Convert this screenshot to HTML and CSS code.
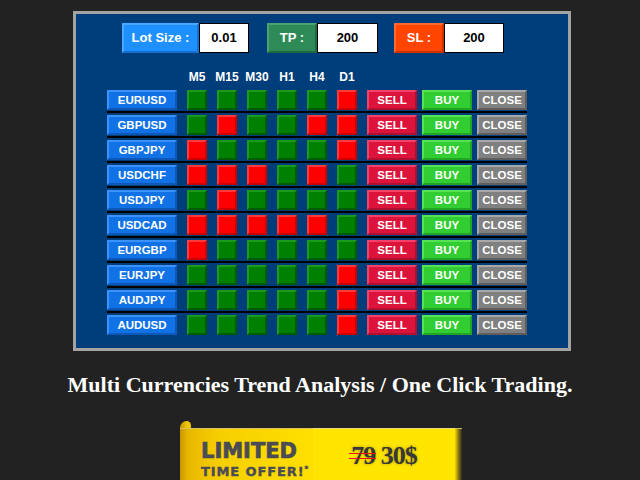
FILE: index.html
```html
<!DOCTYPE html>
<html>
<head>
<meta charset="utf-8">
<link rel="stylesheet" href="styles.css">
</head>
<body>
<div class="panel">
  <div class="topbar">
    <div class="tag tag-lot">Lot Size :</div><div class="field field-lot">0.01</div>
    <div class="tag tag-tp">TP :</div><div class="field field-tp">200</div>
    <div class="tag tag-sl">SL :</div><div class="field field-sl">200</div>
  </div>
  <div class="heads">
    <div class="head-space"></div>
    <div class="head"><span>M5</span></div>
    <div class="head"><span>M15</span></div>
    <div class="head"><span>M30</span></div>
    <div class="head"><span>H1</span></div>
    <div class="head"><span>H4</span></div>
    <div class="head"><span>D1</span></div>
  </div>
  <div class="grid">
    <div class="row"><div class="btn sym">EURUSD</div><div class="sq g"></div><div class="sq g"></div><div class="sq g"></div><div class="sq g"></div><div class="sq g"></div><div class="sq r"></div><div class="trade"><div class="btn sell">SELL</div><div class="btn buy">BUY</div><div class="btn close">CLOSE</div></div></div>
    <div class="rule"></div>
    <div class="row"><div class="btn sym">GBPUSD</div><div class="sq g"></div><div class="sq r"></div><div class="sq g"></div><div class="sq g"></div><div class="sq r"></div><div class="sq r"></div><div class="trade"><div class="btn sell">SELL</div><div class="btn buy">BUY</div><div class="btn close">CLOSE</div></div></div>
    <div class="rule"></div>
    <div class="row"><div class="btn sym">GBPJPY</div><div class="sq r"></div><div class="sq g"></div><div class="sq g"></div><div class="sq g"></div><div class="sq g"></div><div class="sq r"></div><div class="trade"><div class="btn sell">SELL</div><div class="btn buy">BUY</div><div class="btn close">CLOSE</div></div></div>
    <div class="rule"></div>
    <div class="row"><div class="btn sym">USDCHF</div><div class="sq r"></div><div class="sq r"></div><div class="sq r"></div><div class="sq g"></div><div class="sq r"></div><div class="sq g"></div><div class="trade"><div class="btn sell">SELL</div><div class="btn buy">BUY</div><div class="btn close">CLOSE</div></div></div>
    <div class="rule"></div>
    <div class="row"><div class="btn sym">USDJPY</div><div class="sq g"></div><div class="sq r"></div><div class="sq g"></div><div class="sq g"></div><div class="sq g"></div><div class="sq g"></div><div class="trade"><div class="btn sell">SELL</div><div class="btn buy">BUY</div><div class="btn close">CLOSE</div></div></div>
    <div class="rule"></div>
    <div class="row"><div class="btn sym">USDCAD</div><div class="sq r"></div><div class="sq r"></div><div class="sq r"></div><div class="sq r"></div><div class="sq r"></div><div class="sq g"></div><div class="trade"><div class="btn sell">SELL</div><div class="btn buy">BUY</div><div class="btn close">CLOSE</div></div></div>
    <div class="rule"></div>
    <div class="row"><div class="btn sym">EURGBP</div><div class="sq r"></div><div class="sq g"></div><div class="sq g"></div><div class="sq g"></div><div class="sq g"></div><div class="sq g"></div><div class="trade"><div class="btn sell">SELL</div><div class="btn buy">BUY</div><div class="btn close">CLOSE</div></div></div>
    <div class="rule"></div>
    <div class="row"><div class="btn sym">EURJPY</div><div class="sq g"></div><div class="sq g"></div><div class="sq g"></div><div class="sq g"></div><div class="sq g"></div><div class="sq r"></div><div class="trade"><div class="btn sell">SELL</div><div class="btn buy">BUY</div><div class="btn close">CLOSE</div></div></div>
    <div class="rule"></div>
    <div class="row"><div class="btn sym">AUDJPY</div><div class="sq g"></div><div class="sq g"></div><div class="sq g"></div><div class="sq g"></div><div class="sq g"></div><div class="sq r"></div><div class="trade"><div class="btn sell">SELL</div><div class="btn buy">BUY</div><div class="btn close">CLOSE</div></div></div>
    <div class="rule"></div>
    <div class="row"><div class="btn sym">AUDUSD</div><div class="sq g"></div><div class="sq g"></div><div class="sq g"></div><div class="sq g"></div><div class="sq g"></div><div class="sq r"></div><div class="trade"><div class="btn sell">SELL</div><div class="btn buy">BUY</div><div class="btn close">CLOSE</div></div></div>
  </div>
</div>
<h1 class="title">Multi Currencies Trend Analysis / One Click Trading.</h1>
<div class="banner">
  <div class="curl"></div>
  <div class="ribbon">
    <div class="ribbon-left">
      <div class="limited">LIMITED</div>
      <div class="offer">TIME OFFER!<span class="star">*</span></div>
    </div>
    <div class="ribbon-right"><span class="old">79</span> 30$</div>
    <div class="ribbon-shade"></div>
  </div>
</div>
</body>
</html>
```
FILE: styles.css
```css
html, body {
  margin: 0;
  padding: 0;
}
body {
  background: #222222;
  width: 640px;
  height: 480px;
  overflow: hidden;
  font-family: "Liberation Sans", Arial, sans-serif;
}

.panel {
  box-sizing: border-box;
  width: 498px;
  height: 340px;
  margin: 11px 0 0 73px;
  border: 3px solid #a3a3a3;
  background: #003d7b;
  padding-top: 9px;
}

.topbar {
  display: flex;
  margin-left: 46px;
  height: 30px;
}
.tag {
  box-sizing: border-box;
  height: 30px;
  border: 2px solid;
  color: #fff;
  font-weight: bold;
  font-size: 13px;
  line-height: 26px;
  text-align: center;
}
.tag-lot {
  width: 77px;
  background: #1e90ff;
  border-color: #48a8ff #1670d0 #1670d0 #48a8ff;
}
.tag-tp {
  width: 50px;
  margin-left: 18px;
  background: #2e8b57;
  border-color: #47a470 #1f6a40 #1f6a40 #47a470;
}
.tag-sl {
  width: 50px;
  margin-left: 16px;
  background: #ff4500;
  border-color: #ff6a30 #cc3300 #cc3300 #ff6a30;
}
.field {
  box-sizing: border-box;
  height: 30px;
  background: #fff;
  border: 1px solid #000;
  color: #000;
  font-weight: bold;
  font-size: 13px;
  line-height: 28px;
  text-align: center;
}
.field-lot { width: 50px; }
.field-tp { width: 61px; }
.field-sl { width: 60px; }

.heads {
  display: flex;
  gap: 10px;
  margin: 17px 0 0 31px;
  height: 14px;
}
.head-space { width: 70px; }
.head {
  width: 20px;
  display: flex;
  justify-content: center;
  color: #fff;
  font-weight: bold;
  font-size: 12px;
  line-height: 14px;
  white-space: nowrap;
}

.grid {
  margin: 6px 0 0 31px;
  width: 420px;
}
.row {
  display: flex;
  gap: 10px;
  height: 20px;
  margin-bottom: 1px;
}
.rule {
  height: 2px;
  background: #000;
  margin-bottom: 2px;
}
.trade {
  display: flex;
  gap: 5px;
}
.btn {
  box-sizing: border-box;
  height: 20px;
  border: 2px solid;
  color: #fff;
  font-weight: bold;
  font-size: 11.5px;
  line-height: 15px;
  padding-top: 1px;
  text-align: center;
  width: 50px;
}
.sym {
  width: 70px;
  background: #1172e6;
  border-color: #3a92ff #0b58b8 #0b58b8 #3a92ff;
}
.sell {
  background: #dc143c;
  border-color: #f4416a #b00f30 #b00f30 #f4416a;
}
.buy {
  background: #32cd32;
  border-color: #55e255 #22a522 #22a522 #55e255;
}
.close {
  background: #808080;
  border-color: #a8a8a8 #5e5e5e #5e5e5e #a8a8a8;
}
.sq {
  box-sizing: border-box;
  width: 20px;
  height: 20px;
  border: 2px solid;
}
.sq.g {
  background: #008000;
  border-color: #1c9a1c #005c00 #005c00 #1c9a1c;
}
.sq.r {
  background: #ff0000;
  border-color: #ff3a3a #cc0000 #cc0000 #ff3a3a;
}

.title {
  margin: 21px 0 0 0;
  font-family: "Liberation Serif", "Times New Roman", serif;
  font-weight: bold;
  font-size: 22px;
  line-height: 26px;
  color: #fff;
  text-align: center;
}

.banner {
  margin: 23px 0 0 180px;
  width: 282px;
}
.curl {
  width: 11px;
  height: 7px;
  border-radius: 9px 6px 0 0;
  background: linear-gradient(90deg, #c99400, #f3c800 70%, #e6c400);
}
.ribbon {
  display: flex;
  height: 60px;
}
.ribbon-left {
  box-sizing: border-box;
  width: 133px;
  padding: 12px 0 0 21px;
  background: linear-gradient(90deg, #c99600 0, #e8b800 6%, #f6cf00 30%, #fbd900 70%, #ffdf00 100%);
  border-top: 1px solid #d8c060;
}
.limited {
  font-family: "DejaVu Sans", sans-serif;
  font-weight: bold;
  font-size: 21px;
  line-height: 21px;
  color: #4b4b55;
  -webkit-text-stroke: 0.7px #4b4b55;
}
.offer {
  font-family: "DejaVu Sans", sans-serif;
  font-weight: bold;
  font-size: 13px;
  line-height: 14px;
  letter-spacing: 0.9px;
  color: #4b4b55;
  -webkit-text-stroke: 0.4px #4b4b55;
  white-space: nowrap;
}
.star {
  font-size: 7px;
  vertical-align: 5px;
  letter-spacing: 0;
}
.ribbon-right {
  box-sizing: border-box;
  width: 142px;
  padding-top: 13px;
  background: #ffe500;
  border-top: 1px solid #e8d880;
  text-align: center;
  font-family: "Liberation Serif", "Times New Roman", serif;
  font-weight: bold;
  font-size: 26px;
  line-height: 28px;
  letter-spacing: -1px;
  color: #383838;
  text-shadow: 0 0 3px rgba(0, 0, 0, 0.35);
}
.old {
  position: relative;
}
.old::after {
  content: "";
  position: absolute;
  left: -2px;
  right: -1px;
  top: 12px;
  height: 6px;
  border-top: 1.5px solid #e8101a;
  border-bottom: 1.5px solid #e8101a;
  box-sizing: border-box;
}
.ribbon-shade {
  width: 7px;
  background: linear-gradient(90deg, #f0d400, #8a7a10 50%, #2a2a22);
  border-top: 1px solid #c8b860;
}
```
